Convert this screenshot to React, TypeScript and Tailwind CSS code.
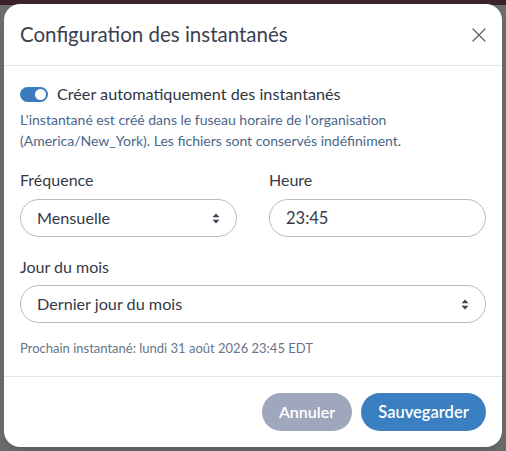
import { X } from "lucide-react";

const SortIcon = () => (
  <svg width="8" height="11" viewBox="0 0 8 11" className="shrink-0">
    <path d="M4 0.5 L7.5 4.3 H0.5 Z" fill="#3b4252" />
    <path d="M4 10.5 L7.5 6.7 H0.5 Z" fill="#3b4252" />
  </svg>
);

const Toggle = () => (
  <div className="relative h-[15px] w-[28px] shrink-0 rounded-full bg-[#3b7cc0]">
    <div className="absolute right-[2px] top-[2px] h-[11px] w-[11px] rounded-full bg-white" />
  </div>
);

export default function App() {
  return (
    <div
      className="h-[451px] w-[506px] overflow-hidden bg-[linear-gradient(#3b2229_0_5px,#6d6d6d_5px)] pl-[4px] pt-[4px]"
      style={{ fontFamily: "Lato, 'Noto Sans', sans-serif" }}
    >
      <div className="flex h-[443px] w-[498px] flex-col rounded-[16px] bg-white shadow-lg">
        {/* Header */}
        <div className="flex h-[62px] items-center justify-between border-b border-[#e3e5e9] pl-4 pr-[11px]">
          <h2 className="text-[20.5px] text-[#394150]">Configuration des instantanés</h2>
          <X size={24} strokeWidth={1.4} className="text-[#5f6672]" />
        </div>

        {/* Body */}
        <div className="flex-1 px-4 pt-[17px]">
          <div className="flex h-[22px] items-center gap-[9px]">
            <Toggle />
            <span className="text-[16.2px] text-[#2f3542]">Créer automatiquement des instantanés</span>
          </div>
          <p className="mt-[4px] text-[14px] leading-[21px] text-[#4a6788]">
            L'instantané est créé dans le fuseau horaire de l'organisation
            <br />
            (America/New_York). Les fichiers sont conservés indéfiniment.
          </p>

          <div className="mt-[18px] grid grid-cols-2 gap-x-[32px]">
            <div>
              <div className="mb-[8px] text-[16px] leading-[22px] text-[#343a46]">Fréquence</div>
              <div className="flex h-[38px] items-center justify-between rounded-full border border-[#b7bbc3] pl-[16px] pr-[16px] text-[16.2px] text-[#343a46]">
                <span>Mensuelle</span>
                <SortIcon />
              </div>
            </div>
            <div>
              <div className="mb-[8px] text-[16px] leading-[22px] text-[#343a46]">Heure</div>
              <div className="flex h-[38px] items-center rounded-full border border-[#b7bbc3] pl-[16px] text-[16.5px] text-[#343a46]">
                23:45
              </div>
            </div>
          </div>

          <div className="mt-[19px] mb-[7px] text-[16px] leading-[22px] text-[#343a46]">Jour du mois</div>
          <div className="flex h-[38px] items-center justify-between rounded-full border border-[#b7bbc3] pl-[16px] pr-[16px] text-[16.2px] text-[#343a46]">
            <span>Dernier jour du mois</span>
            <SortIcon />
          </div>

          <div className="mt-[15px] text-[13px] leading-[20px] text-[#66758d]">
            Prochain instantané: lundi 31 août 2026 23:45 EDT
          </div>
        </div>

        {/* Footer */}
        <div className="flex h-[71px] items-center justify-end gap-[9px] border-t border-[#e3e5e9] px-4">
          <button className="h-[38px] w-[90px] rounded-full bg-[#9fa7bc] text-[16px] font-semibold text-white">
            Annuler
          </button>
          <button className="h-[38px] w-[125px] rounded-full bg-[#3a7fc1] text-[16.5px] font-semibold text-white">
            Sauvegarder
          </button>
        </div>
      </div>
    </div>
  );
}
